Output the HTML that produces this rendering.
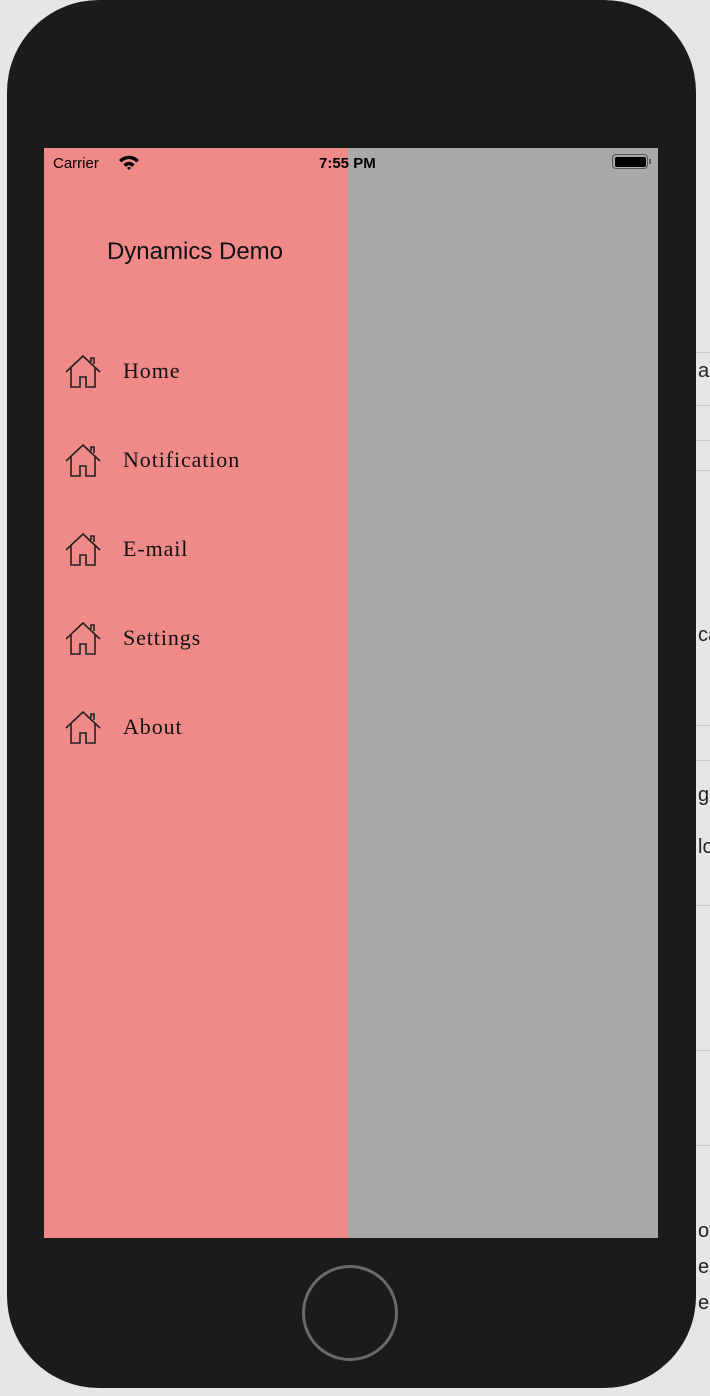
<!DOCTYPE html>
<html><head><meta charset="utf-8"><style>
*{margin:0;padding:0;box-sizing:border-box}
body{width:710px;height:1396px;background:#e6e6e6;position:relative;overflow:hidden;font-family:"Liberation Sans",sans-serif}
.phone{position:absolute;left:7px;top:0;width:689px;height:1388px;background:#1b1b1b;border-radius:92px}
.screen{position:absolute;left:44px;top:148px;width:614px;height:1090px;background:#a9a9a9}
.drawer{position:absolute;left:0;top:0;width:304px;height:1090px;background:#ef8a89}
.sb{position:absolute;top:7px;font-size:15px;color:#000}
.title{position:absolute;left:0;width:302px;text-align:center;top:90px;font-size:24px;color:#111}
.item{position:absolute;left:20px;height:40px;display:flex;align-items:center}
.item span{font-family:"Liberation Serif",serif;font-size:22px;margin-left:21px;letter-spacing:0.9px;color:#111}
.home{position:absolute;left:302px;top:1265px;width:96px;height:96px;border:3px solid #6a6a6a;border-radius:50%}
.rt{position:absolute;left:698px;font-size:20px;color:#222}
.ln{position:absolute;left:696px;width:14px;height:1px;background:#c8c8c8}
</style></head><body>
<div class="ln" style="top:352px"></div><div class="ln" style="top:405px"></div><div class="ln" style="top:440px"></div><div class="ln" style="top:470px"></div><div class="ln" style="top:725px"></div><div class="ln" style="top:760px"></div><div class="ln" style="top:905px"></div><div class="ln" style="top:1050px"></div><div class="ln" style="top:1145px"></div>
<div class="rt" style="top:360px">ar</div><div class="rt" style="top:624px">ca</div><div class="rt" style="top:784px">ge</div><div class="rt" style="top:836px">lo</div><div class="rt" style="top:1220px">ov</div><div class="rt" style="top:1256px">e</div><div class="rt" style="top:1292px">e</div>
<div class="phone"></div>
<div class="screen">
 <div class="drawer">
  <div class="title">Dynamics Demo</div>
 </div>
 <div class="sb" style="left:9px">Carrier</div>
 <svg style="position:absolute;left:74px;top:6px" width="22" height="16" viewBox="0 0 22 16"><path d="M1 6 A14 14 0 0 1 21 6 L18.5 8.5 A10 10 0 0 0 3.5 8.5Z M5.5 10.5 A7 7 0 0 1 16.5 10.5 L14 13 A3.5 3.5 0 0 0 8 13Z M9 14 L11 16 L13 14 A2.5 2.5 0 0 0 9 14Z" fill="#000"/></svg>
 <div class="sb" style="left:275px;font-weight:bold">7:55 PM</div>
 <div style="position:absolute;left:568px;top:6px;width:36px;height:15px;border:1.5px solid #555;border-radius:4px;padding:1.5px"><div style="width:100%;height:100%;background:#000;border-radius:2px"></div></div>
 <div style="position:absolute;left:605px;top:11px;width:2px;height:5px;background:#555"></div>
</div>
<div style="position:absolute;left:44px;top:148px;width:304px;height:1090px">
 <div class="item" style="top:203px"><svg width="38" height="36" viewBox="0 0 38 36" fill="none" stroke="#222" stroke-width="1.6"><path d="M2 19 L19 3 L36 19 M7 15 V34 H16 V24 H22 V34 H31 V15 M27 9 V5 H30 V11"/></svg><span>Home</span></div>
 <div class="item" style="top:292px"><svg width="38" height="36" viewBox="0 0 38 36" fill="none" stroke="#222" stroke-width="1.6"><path d="M2 19 L19 3 L36 19 M7 15 V34 H16 V24 H22 V34 H31 V15 M27 9 V5 H30 V11"/></svg><span>Notification</span></div>
 <div class="item" style="top:381px"><svg width="38" height="36" viewBox="0 0 38 36" fill="none" stroke="#222" stroke-width="1.6"><path d="M2 19 L19 3 L36 19 M7 15 V34 H16 V24 H22 V34 H31 V15 M27 9 V5 H30 V11"/></svg><span>E-mail</span></div>
 <div class="item" style="top:470px"><svg width="38" height="36" viewBox="0 0 38 36" fill="none" stroke="#222" stroke-width="1.6"><path d="M2 19 L19 3 L36 19 M7 15 V34 H16 V24 H22 V34 H31 V15 M27 9 V5 H30 V11"/></svg><span>Settings</span></div>
 <div class="item" style="top:559px"><svg width="38" height="36" viewBox="0 0 38 36" fill="none" stroke="#222" stroke-width="1.6"><path d="M2 19 L19 3 L36 19 M7 15 V34 H16 V24 H22 V34 H31 V15 M27 9 V5 H30 V11"/></svg><span>About</span></div>
</div>
<div class="home"></div>
</body></html>
